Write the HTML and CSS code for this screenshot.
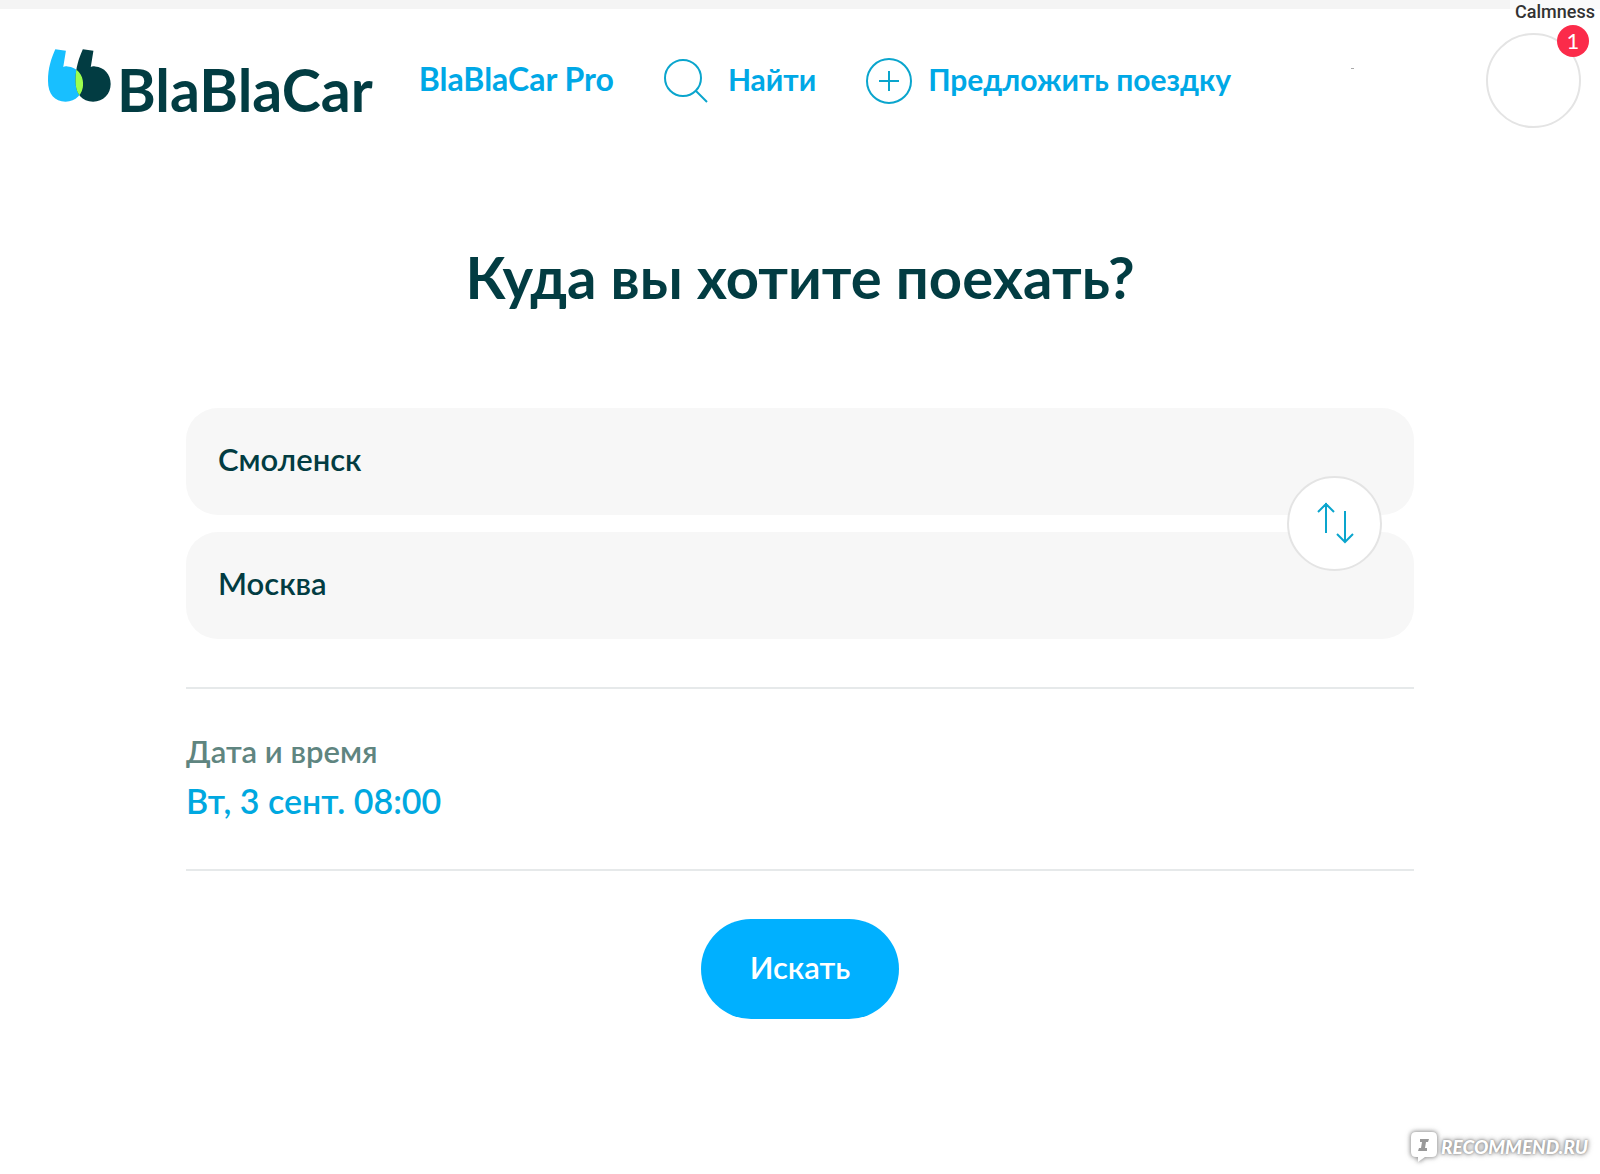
FILE: index.html
```html
<!DOCTYPE html>
<html lang="ru">
<head>
<meta charset="utf-8">
<meta name="viewport" content="width=device-width, initial-scale=1">
<title>BlaBlaCar</title>
<link rel="stylesheet" href="styles.css">
</head>
<body>
<div class="topbar"><span class="username">Calmness</span></div>
<header class="header">
  <a class="logo" href="#">
    <svg class="logo-mark" viewBox="54 148 190 158" aria-hidden="true">
      <defs>
        <path id="quote" d="M76 148L108 152L100 201C104 199 109 199 113 200C141 202 160 224 160 253C160 283 138 306 107 306C74 306 54 284 54 243C54 205 64 175 76 148Z"/>
        <clipPath id="overlap"><use href="#quote"/></clipPath>
      </defs>
      <use href="#quote" fill="#18bfff"/>
      <use href="#quote" x="83" fill="#023c42"/>
      <g clip-path="url(#overlap)"><use href="#quote" x="83" fill="#9cff4e"/></g>
    </svg>
    <span class="logo-text">BlaBlaCar</span>
  </a>
  <nav class="nav">
    <a class="nav-link nav-link-pro" href="#"><span>BlaBlaCar Pro</span></a>
    <a class="nav-link nav-link-search" href="#">
      <svg class="icon-search" viewBox="0 0 44 44" aria-hidden="true"><circle cx="19" cy="19" r="18"/><path d="M32 32L43 43"/></svg>
      <span>Найти</span>
    </a>
    <a class="nav-link nav-link-offer" href="#">
      <svg class="icon-plus" viewBox="0 0 46 46" aria-hidden="true"><circle cx="23" cy="23" r="22"/><path d="M23 13V33M13 23H33"/></svg>
      <span>Предложить поездку</span>
    </a>
  </nav>
  <span class="speck" aria-hidden="true"></span>
  <a class="avatar" href="#" aria-label="Профиль"><span class="badge">1</span></a>
</header>
<main class="main">
  <h1 class="title">Куда вы хотите поехать?</h1>
  <form class="search">
    <div class="places">
      <input class="place" type="text" value="Смоленск" aria-label="Откуда">
      <input class="place" type="text" value="Москва" aria-label="Куда">
      <button class="swap" type="button" aria-label="Поменять местами">
        <svg class="icon-swap" viewBox="0 0 38 42" aria-hidden="true"><path d="M10 31V1M2 10L10 2L18 10M29 9V40M21 32L29 40L37 32"/></svg>
      </button>
    </div>
    <div class="when">
      <span class="when-label" id="when-label">Дата и время</span>
      <button class="when-value" type="button" aria-describedby="when-label">Вт, 3 сент. 08:00</button>
    </div>
    <button class="submit" type="submit">Искать</button>
  </form>
</main>
<footer class="footer">
  <a class="watermark" href="#">
    <svg class="watermark-icon" viewBox="0 0 26 30" aria-hidden="true"><path fill="#fff" d="M5 0H21Q26 0 26 5V20Q26 25 21 25H14L7 30V25H5Q0 25 0 20V5Q0 0 5 0Z"/><path fill="#999" d="M9 7H18L17 10H15L14 16H16L16 19H7L8 16H10L11 10H9Z"/></svg>
    <span>RECOMMEND.RU</span>
  </a>
</footer>
</body>
</html>
```
FILE: styles.css
```css
* { box-sizing: border-box; }

body {
  margin: 0;
  min-height: 100vh;
  display: flex;
  flex-direction: column;
  background: #fff;
  color: #023c42;
  font-family: Lato, "Open Sans", sans-serif;
}

a { color: inherit; text-decoration: none; }

button, input {
  margin: 0;
  padding: 0;
  border: 0;
  background: none;
  color: inherit;
  font: inherit;
}

button { cursor: pointer; }

.topbar {
  display: flex;
  justify-content: flex-end;
  height: 9px;
  background: #f4f4f4;
}

.username {
  padding: 0 5px;
  background: #fafafa;
  color: #333;
  font: 500 18px/24px Roboto, sans-serif;
}

.header {
  display: flex;
  align-items: flex-start;
  padding: 24px 19px 0 48px;
}

.logo {
  display: flex;
  align-items: flex-start;
  gap: 6px;
  margin-top: 16px;
}

.logo-mark { width: 63px; height: 53px; }

.logo-text {
  margin-top: 5px;
  font-size: 59px;
  font-weight: 700;
  line-height: 72px;
}

.nav {
  display: flex;
  align-items: center;
  gap: 50px;
  height: 95px;
  margin-left: 46px;
  color: #00a8e6;
}

.nav-link {
  display: flex;
  align-items: center;
  font-size: 30px;
  font-weight: 700;
  line-height: 36px;
  white-space: nowrap;
}

.nav-link span { padding-bottom: 4px; }
.nav-link-pro { font-size: 32px; }
.nav-link-search { gap: 20px; }
.nav-link-offer { gap: 16px; }

.icon-search, .icon-plus, .icon-swap {
  fill: none;
  stroke: #0aa5cd;
  stroke-width: 2;
}

.icon-search { width: 44px; height: 44px; }
.icon-plus { width: 46px; height: 46px; }

.speck {
  width: 3px;
  height: 1px;
  margin: 35px 0 0 120px;
  background: #aaa;
}

.avatar {
  position: relative;
  width: 95px;
  height: 95px;
  margin-left: auto;
  border: 2px solid #e4e4e4;
  border-radius: 50%;
}

.badge {
  position: absolute;
  top: -10px;
  right: -10px;
  width: 32px;
  height: 32px;
  border-radius: 50%;
  background: #fb2b4a;
  color: #fff;
  font-size: 22px;
  line-height: 32px;
  text-align: center;
}

.main {
  width: 100%;
  max-width: 1260px;
  margin: 0 auto;
  padding: 114px 16px 48px;
}

.title {
  margin: 0 0 96px;
  font-size: 58px;
  font-weight: 700;
  line-height: 70px;
  text-align: center;
}

.search {
  font-size: 31px;
  font-weight: 600;
  line-height: 37px;
}

.places {
  position: relative;
  display: flex;
  flex-direction: column;
  gap: 17px;
}

.place {
  width: 100%;
  height: 107px;
  padding: 0 144px 6px 32px;
  border-radius: 32px;
  background: #f7f7f7;
}

.swap {
  position: absolute;
  top: calc(50% - 48px);
  right: 32px;
  display: flex;
  align-items: center;
  justify-content: center;
  width: 95px;
  height: 95px;
  border: 2px solid #e4e4e4;
  border-radius: 50%;
  background: #fff;
}

.icon-swap { width: 38px; height: 42px; }

.when {
  display: flex;
  flex-direction: column;
  align-items: flex-start;
  gap: 10px;
  margin: 48px 0;
  padding: 44px 0 47px;
  border: solid #e6e9ea;
  border-width: 2px 0;
}

.when-label { color: #5f8580; }

.when-value {
  color: #00a8e0;
  font-size: 34px;
  line-height: 42px;
}

.submit {
  display: block;
  width: 198px;
  height: 100px;
  margin: 0 auto;
  padding-bottom: 4px;
  border-radius: 50px;
  background: #00b0ff;
  color: #fff;
}

.footer {
  display: flex;
  justify-content: flex-end;
  margin-top: auto;
  padding: 0 12px 12px;
}

.watermark {
  display: flex;
  align-items: center;
  gap: 4px;
  color: #fff;
  font-size: 19px;
  font-style: italic;
  font-weight: 900;
  line-height: 24px;
  text-shadow: 0 0 2px #888, 0 0 4px #999, 0 0 6px #aaa;
}

.watermark-icon {
  width: 26px;
  height: 30px;
  overflow: visible;
  filter: drop-shadow(0 0 2px #999) drop-shadow(0 0 2px #bbb);
}
```
